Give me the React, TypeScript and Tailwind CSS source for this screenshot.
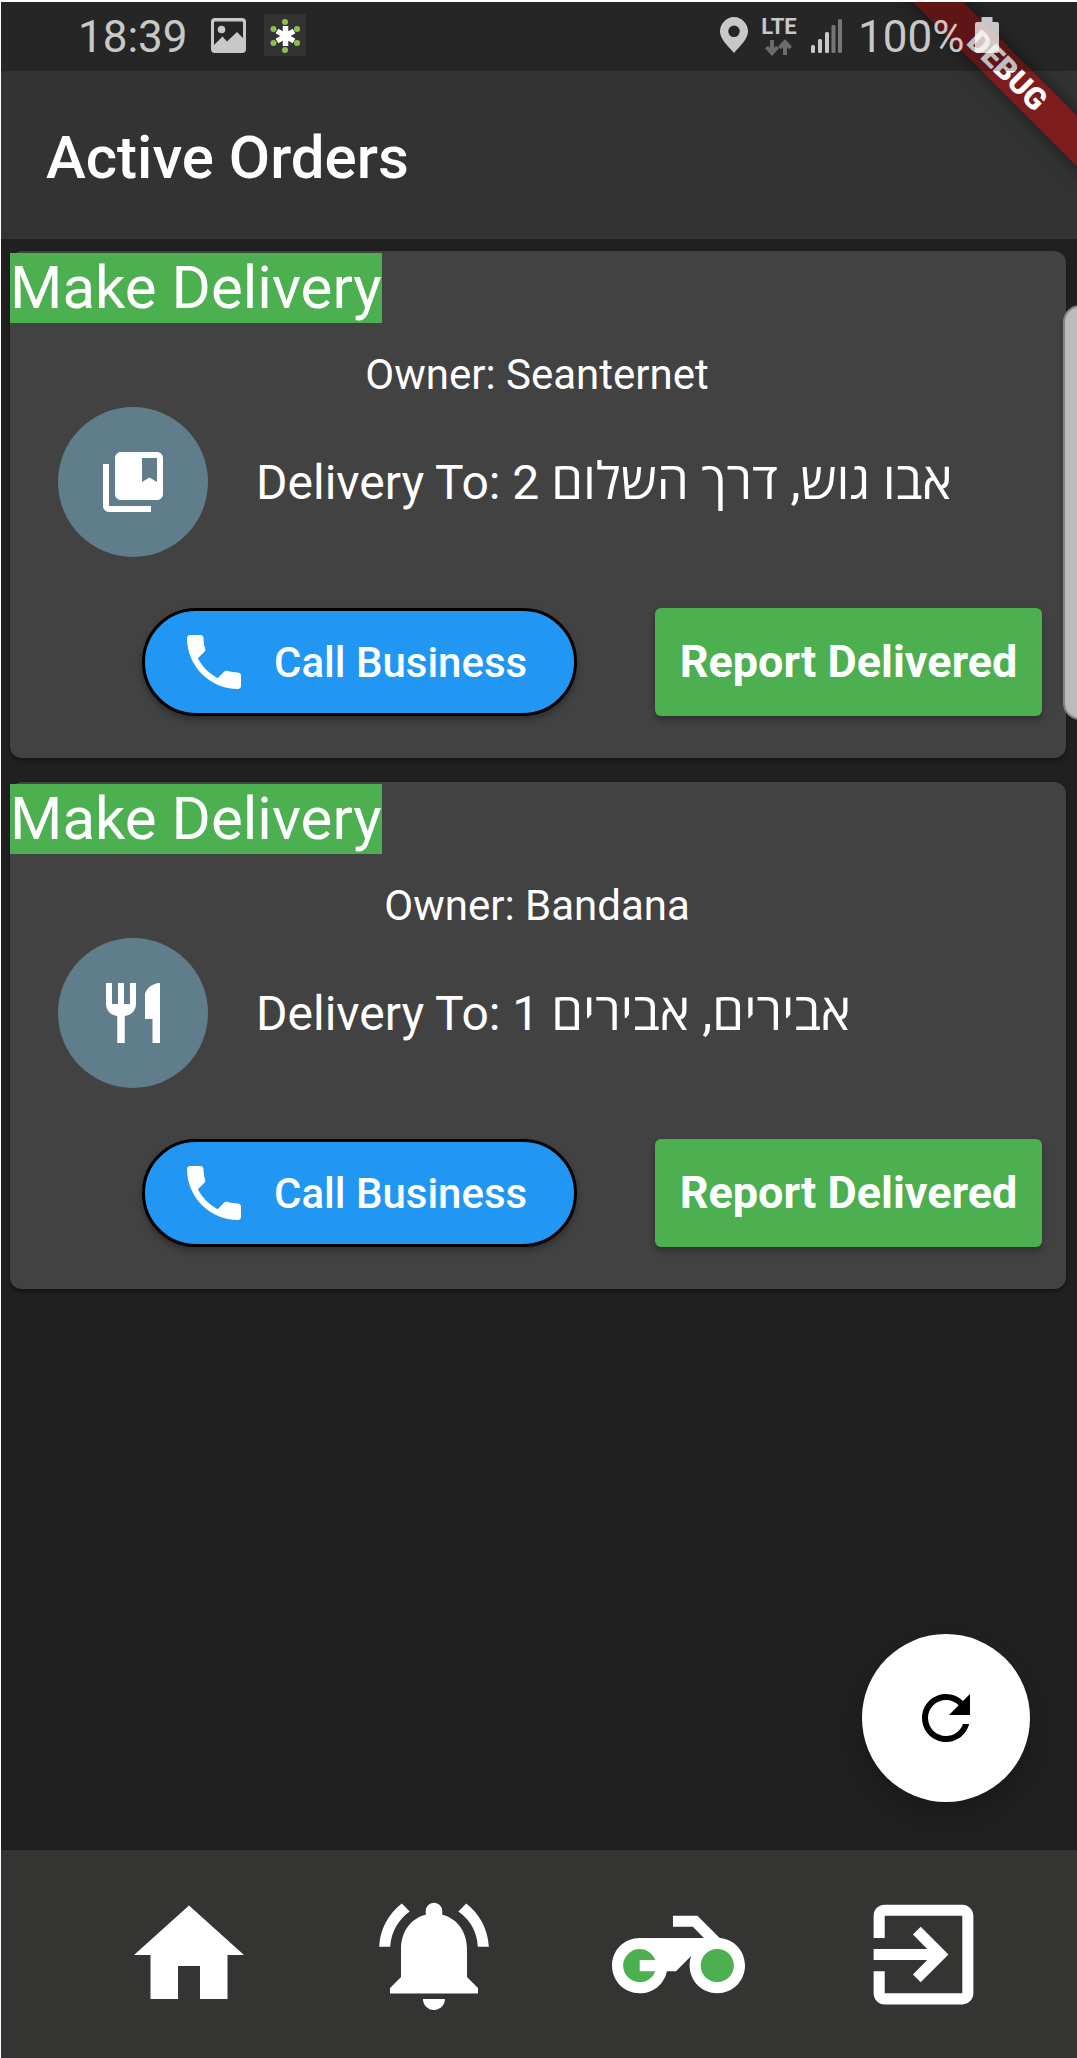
import { MdCollectionsBookmark, MdRestaurant, MdPhone, MdRefresh, MdHome, MdNotificationsActive, MdExitToApp } from "react-icons/md";
import type { ReactNode } from "react";

function StatusBar() {
  return (
    <div className="relative z-20 flex h-[69px] items-start bg-black/25 text-white/75">
      <div className="flex w-[620px] items-start pl-[77px]">
        <span className="mt-[9px] w-[112px] text-[44px] leading-[52px]">18:39</span>
        <svg className="mt-4 ml-[21px]" width="35" height="35" viewBox="0 0 35 35" fill="currentColor">
          <path fillRule="evenodd" d="M4 0H31A4 4 0 0 1 35 4V31A4 4 0 0 1 31 35H4A4 4 0 0 1 0 31V4A4 4 0 0 1 4 0ZM4 3.5Q3 3.5 3 4.5V27L11.5 18.5L16 23.5L26 14L32 20V4.5Q32 3.5 31 3.5Z" />
          <circle cx="10.5" cy="11.5" r="3.8" />
        </svg>
        <svg className="mt-3 ml-[18px] bg-[#333]" width="42" height="42" viewBox="0 0 42 42">
          <g stroke="#fff" strokeWidth="5.5">
            <path d="M21.500 12V32M13 17L30 27M30 17L13 27" />
          </g>
          <g fill="#8bc34a">
            <circle cx="21" cy="8" r="3" /><circle cx="21" cy="36" r="3" />
            <circle cx="9.500" cy="15" r="3" /><circle cx="33" cy="15" r="3" />
            <circle cx="9.500" cy="29" r="3" /><circle cx="33" cy="29" r="3" />
          </g>
        </svg>
      </div>
      <div className="flex items-start pl-[98px]">
        <svg className="mt-[15px]" width="30" height="36" viewBox="0 0 30 36" fill="currentColor">
          <path fillRule="evenodd" d="M15 0A14.500 14.500 0 0 1 29 14.500C29 22 21 29 15 36C9 29 1 22 1 14.500A14.500 14.500 0 0 1 15 0ZM15 8.500A5.800 5.800 0 1 0 15 20.100A5.800 5.800 0 0 0 15 8.500Z" />
        </svg>
        <div className="ml-3 flex w-9 flex-col items-center">
          <span className="mt-3 text-[22px] leading-[26px] font-bold">LTE</span>
          <svg className="-mt-px" width="28" height="17" viewBox="0 0 28 17" fill="none" stroke="#6c6c6c" strokeWidth="4">
            <path d="M7 1V14M1.500 8L7 14L12.500 8M20 16V3M14.500 9L20 3L25.500 9" />
          </svg>
        </div>
        <svg className="mt-[17px] ml-[14px]" width="32" height="35" viewBox="0 0 32 35" fill="currentColor">
          <rect x="0" y="26" width="4" height="8" rx="1.500" />
          <rect x="7" y="20" width="4" height="14" rx="1.500" />
          <rect x="14" y="13" width="4" height="21" rx="1.500" />
          <rect x="20.500" y="6" width="4" height="28" rx="1.500" opacity=".5" />
          <rect x="27" y="0" width="4" height="34" rx="1.500" opacity=".5" />
        </svg>
        <span className="mt-[9px] ml-[15px] w-[112px] text-[44px] leading-[52px]">100%</span>
        <svg className="mt-[15px] ml-[5px]" width="24" height="36" viewBox="0 0 24 36" fill="currentColor">
          <path d="M6.500 0H17.500V5H22A2 2 0 0 1 24 7V34A2 2 0 0 1 22 36H2A2 2 0 0 1 0 34V7A2 2 0 0 1 2 5H6.500Z" />
        </svg>
      </div>
    </div>
  );
}

type Order = { owner: string; houseNumber: string; street: string; icon: ReactNode };

function OrderCard({ owner, houseNumber, street, icon }: Order) {
  return (
    <section className="flex h-[507px] flex-col rounded-[12px] bg-[#424242] shadow-[0_3px_4px_rgba(0,0,0,0.35)]">
      <div className="mt-[1.500px] h-[70px] w-[372px] bg-[#4caf50] text-[60px] leading-[70px] whitespace-nowrap">Make Delivery</div>
      <div className="mt-[27px] h-[50px] pr-[2px] text-center text-[42px] leading-[50px]">Owner: {owner}</div>
      <div className="mt-[7px] flex h-[150px] items-center pl-12">
        <div className="flex size-[150px] items-center justify-center rounded-full bg-[#607d8b]">{icon}</div>
        <div className="ml-12 pt-[3px] text-[48px] leading-[56px] whitespace-nowrap" dir="ltr">
          Delivery To: {houseNumber}{" "}
          <span className="font-[Roboto,'Open_Sans',sans-serif] text-[51px] leading-none">{street}</span>
        </div>
      </div>
      <div className="mt-[51px] flex h-[108px] justify-between pr-6 pl-[132px]">
        <button className="flex w-[435px] items-center rounded-full border-[3px] border-black bg-[#2196f3] pl-[33px] text-[42px] font-medium shadow-[0_4px_6px_rgba(0,0,0,0.3)]">
          <MdPhone size={72} />
          <span className="ml-6 pt-px whitespace-nowrap">Call Business</span>
        </button>
        <button className="w-[387px] rounded-[6px] bg-[#4caf50] text-[45px] font-bold whitespace-nowrap shadow-[0_4px_6px_rgba(0,0,0,0.3)]">
          Report Delivered
        </button>
      </div>
    </section>
  );
}

function Motorcycle() {
  return (
    <svg width="133" height="133" viewBox="0 0 24 24" fill="currentColor">
      <circle cx="5" cy="14" r="4" fill="#4caf50" />
      <circle cx="19" cy="14" r="4" fill="#4caf50" />
      <path d="M19.440 9.030L15.410 5H11v2h3.590l2 2H5c-2.800 0-5 2.200-5 5s2.200 5 5 5c2.460 0 4.450-1.690 4.900-4h1.650l2.770-2.770c-.21.54-.32 1.140-.32 1.770 0 2.800 2.200 5 5 5s5-2.200 5-5c0-2.650-1.970-4.770-4.560-4.970zM7.820 15C7.400 16.150 6.280 17 5 17c-1.630 0-3-1.370-3-3s1.370-3 3-3c1.280 0 2.400.85 2.820 2H5v2h2.820zM19 17c-1.660 0-3-1.340-3-3s1.340-3 3-3 3 1.340 3 3-1.340 3-3 3z" />
    </svg>
  );
}

export default function App() {
  return (
    <div className="h-[2058px] w-[1077px] overflow-hidden bg-white pt-[2px] pl-px font-[Roboto,sans-serif] text-white">
      <div className="relative flex h-[2056px] flex-col bg-[#202020]">
        <header className="relative h-[237px] shrink-0 overflow-hidden bg-[#333]">
          <div className="absolute top-[51px] left-[806px] z-10 flex h-9 w-[400px] rotate-45 items-center justify-center bg-[#7e1c1e] text-[30.600px] leading-9 font-black shadow-[0_0_18px_rgba(0,0,0,0.5)]">
            DEBUG
          </div>
          <StatusBar />
          <h1 className="mt-[51px] pl-[45px] text-[60px] leading-[71px] font-medium">Active Orders</h1>
        </header>

        <main className="flex flex-1 flex-col gap-6 pt-3 pr-[11px] pl-[9px]">
          <OrderCard owner="Seanternet" houseNumber="2" street="אבו גוש, דרך השלום" icon={<MdCollectionsBookmark size={72} />} />
          <OrderCard owner="Bandana" houseNumber="1" street="אבירים, אבירים" icon={<MdRestaurant size={72} />} />
        </main>

        <div className="absolute top-[303px] -right-[20px] h-[415px] w-[34px] rounded-[17px] border-[2px] border-[#858585] bg-[#bbb]" />

        <button className="absolute top-[1632px] left-[861px] flex size-[168px] items-center justify-center rounded-full bg-white text-black shadow-[0_12px_24px_rgba(0,0,0,0.22)]">
          <MdRefresh size={72} />
        </button>

        <nav className="flex h-[209px] shrink-0 border-t border-[#14280f] bg-[#343432] pt-[38px] pl-[65px]">
          <div className="flex w-[245px] justify-center pt-px"><MdHome size={132} /></div>
          <div className="flex w-[245px] justify-center pt-px"><MdNotificationsActive size={132} /></div>
          <div className="flex w-[245px] justify-center"><Motorcycle /></div>
          <div className="flex w-[245px] justify-center"><MdExitToApp size={133} /></div>
        </nav>
      </div>
    </div>
  );
}
